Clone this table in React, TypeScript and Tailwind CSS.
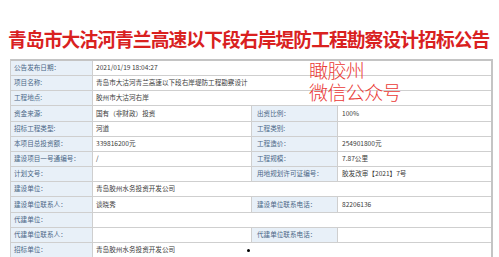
import React from "react";

type Row =
  | { kind: "full"; label: string; value: string }
  | { kind: "quad"; label: string; value: string; label2: string; value2: string };

const rows: Row[] = [
  { kind: "full", label: "公告发布日期：", value: "2021/01/19 18:04:27" },
  { kind: "full", label: "项目名称:", value: "青岛市大沽河青兰高速以下段右岸堤防工程勘察设计" },
  { kind: "full", label: "工程地点:", value: "胶州市大沽河右岸" },
  { kind: "quad", label: "资金来源:", value: "国有（非财政）投资", label2: "出资比例：", value2: "100%" },
  { kind: "quad", label: "招标工程类型:", value: "河道", label2: "工程类别:", value2: "" },
  { kind: "quad", label: "本项目总投资额：", value: "339816200元", label2: "工程造价：", value2: "254901800元" },
  { kind: "quad", label: "建设项目一号通编号：", value: "/", label2: "工程规模：", value2: "7.87公里" },
  { kind: "quad", label: "计划文号：", value: "", label2: "用地规划许可证编号：", value2: "胶发改审【2021】7号" },
  { kind: "full", label: "建设单位：", value: "青岛胶州水务投资开发公司" },
  { kind: "quad", label: "建设单位联系人：", value: "谈晓秀", label2: "建设单位联系电话：", value2: "82206136" },
  { kind: "full", label: "代建单位：", value: "" },
  { kind: "quad", label: "代建单位联系人：", value: "", label2: "代建单位联系电话：", value2: "" },
  { kind: "full", label: "招标单位：", value: "青岛胶州水务投资开发公司" },
];

const font = { fontFamily: '"Noto Sans CJK SC", "Noto Sans", sans-serif' };

function Label({ children }: { children: React.ReactNode }) {
  return (
    <div className="flex items-center border-r border-b border-[#cfcfcf] bg-[#e8f0f8] pl-[3px] text-[6.6px] text-[#4b6786] whitespace-nowrap overflow-hidden">
      {children}
    </div>
  );
}

function Value({ children, span }: { children: React.ReactNode; span?: boolean }) {
  return (
    <div
      className={
        "flex items-center border-r border-b border-[#cfcfcf] bg-white pl-[3px] text-[6.6px] text-[#3a3a3a] whitespace-nowrap overflow-hidden " +
        (span ? "col-span-3" : "")
      }
    >
      {children}
    </div>
  );
}

export default function App() {
  return (
    <div className="relative w-[499px] h-[257px] overflow-hidden bg-white" style={font}>
      <div className="h-[59px] flex items-end pb-[10px] pl-[8px]">
        <h1 className="text-[18.8px] leading-[20px] font-bold tracking-[-0.95px] text-[#d9211f] whitespace-nowrap">
          青岛市大沽河青兰高速以下段右岸堤防工程勘察设计招标公告
        </h1>
      </div>
      <div className="ml-[10px] w-[482px] border-t-2 border-l border-t-[#c4c4c4] border-l-[#cfcfcf] grid grid-cols-[82px_159px_86px_1fr] auto-rows-[15.17px]">
        {rows.map((r, i) =>
          r.kind === "full" ? (
            <React.Fragment key={i}>
              <Label>{r.label}</Label>
              <Value span>{r.value}</Value>
            </React.Fragment>
          ) : (
            <React.Fragment key={i}>
              <Label>{r.label}</Label>
              <Value>{r.value}</Value>
              <div className="flex items-center border-r border-b border-[#cfcfcf] bg-[#e8f0f8] pl-[5px] text-[6.6px] text-[#4b6786] whitespace-nowrap overflow-hidden">
                {r.label2}
              </div>
              <div className="flex items-center border-r border-b border-[#cfcfcf] bg-white pl-[4px] text-[6.6px] text-[#3a3a3a] whitespace-nowrap overflow-hidden">
                {r.value2}
              </div>
            </React.Fragment>
          )
        )}
      </div>
      <div className="absolute right-[6px] top-[59px] h-[200px] w-[2px] bg-[#c4c4c4]" />
      <div className="absolute left-[309px] top-[59px] text-[19px] leading-[22px] text-[#ea3a36] font-light tracking-[-0.6px]">
        <div>瞰胶州</div>
        <div>微信公众号</div>
      </div>
      <div className="absolute left-[247px] top-[249px] h-[3px] w-[3px] rounded-full bg-black" />
    </div>
  );
}
